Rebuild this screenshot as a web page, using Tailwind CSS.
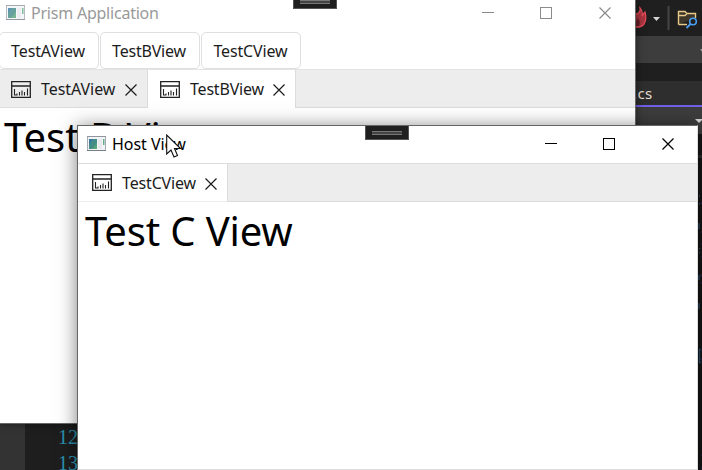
<!DOCTYPE html>
<html lang="en">
<head>
<meta charset="utf-8">
<title>Prism Application</title>
<script src="https://cdn.jsdelivr.net/npm/@tailwindcss/browser@4"></script>
</head>
<body class="relative h-[470px] w-[702px] overflow-hidden bg-[#1f1f1f] font-['Noto_Sans','Open_Sans',sans-serif] text-[16px] text-[#1c1c1c]">
<svg class="hidden">
  <symbol id="app" viewBox="0 0 19 16">
    <rect x=".5" y=".5" width="18" height="14" fill="#f3f4f7" stroke="#a6abb5"/>
    <path d="M0 .5H19" stroke="#8f949d"/>
    <path d="M0 14.500H19" stroke="#777d86"/>
    <rect x="2" y="3" width="8" height="10" fill="#438c88"/>
    <path d="M2 3H6L2 9Z" fill="#397aa0"/><path d="M10 7V13H5Z" fill="#55a579"/>
    <rect x="11" y="3" width="4" height="10" fill="#e8e9ed"/>
    <rect x="16" y="3" width="1.5" height="6" fill="#67ae86"/>
  </symbol>
  <symbol id="chart" viewBox="0 0 20 17">
    <path d="M.7 .7H19.300V16.300H.7ZM.7 5H19.300" fill="none" stroke="#222" stroke-width="1.3"/>
    <path d="M3.500 8V14.500M6 12.500V14.500M8.500 11V14.500M11 9.500V14.500M13.500 11V14.500M16.500 7.500V14.500M3 14H6" fill="none" stroke="#222" stroke-width="1.1"/>
  </symbol>
  <symbol id="cross" viewBox="0 0 12 12"><path d="M.5 .5L11.5 11.5M11.5 .5L.5 11.5" fill="none" stroke="currentColor" stroke-width="1.2"/></symbol>
</svg>

<!-- code editor behind the windows -->
<div class="absolute inset-y-0 right-0 flex w-[67px] flex-col bg-[#141414]">
  <div class="flex h-9 items-center bg-[#1f1f1f]">
    <svg class="h-9 w-[67px]" viewBox="0 0 67 36">
      <path d="M0 14Q6 12 5 8Q8 11 7 16L10 12Q12 20 9 24Q6 28 0 27Z" fill="#a9343f"/>
      <path d="M0 26Q1 20 3 18Q6 22 4 26" fill="#642027"/>
      <path d="M0 15Q6 13 5 8Q8 11 7 16L10 12Q12 20 9 24Q6 28 0 27" fill="none" stroke="#e04a56" stroke-width="1.3"/>
      <path d="M18 17H25L21.500 21Z" fill="#d6d6d6"/>
      <path d="M33.500 6V30" stroke="#454545" stroke-width="2"/>
      <path d="M43.500 24.500V11.500H50L52 13.500H60.500V18M43.500 15.500H50L52 13.500M43.500 24.500H52" fill="#3e372a" stroke="#e8c98a" stroke-width="1.4"/>
      <circle cx="58" cy="21.500" r="3.300" fill="#1f1f1f" stroke="#4aa0f0" stroke-width="1.6"/><path d="M55.500 24L51.500 28" stroke="#4aa0f0" stroke-width="1.8"/>
    </svg>
  </div>
  <div class="flex h-[27px] items-center justify-end bg-[#3d3d3d]"><svg class="h-1 w-[2px]" viewBox="0 0 2 4"><path d="M0 1H2V4Z" fill="#999"/></svg></div>
  <div class="h-[18px] bg-[#1f1f1f]"></div>
  <div class="flex h-6 items-center bg-[#2e2e2e] text-[15px] text-[#e8dfd2]"><span class="-ml-[2px] tracking-[0.4px]">.cs</span></div>
  <div class="h-[2px] bg-[#7160e8]"></div>
  <div class="flex h-[27px] items-center justify-end bg-[#3d3d3d]"><svg class="h-1 w-[7px]" viewBox="0 0 7 4"><path d="M0 0H8L4 4Z" fill="#d6d6d6"/></svg></div>
  <div class="h-[21px] bg-[#171717]"></div>
  <div class="h-[3px] bg-[#2c2c2c]"></div>
  <svg class="h-[312px] w-[67px]" viewBox="0 158 67 312"><path d="M64 196H65M64 204H65M64 223V229M64 248.500H65M64 252.500H65M64 275V280M64 303V309M64 349.500H66M64.500 350V362M64 362.500H66" fill="none" stroke="#284d6b" stroke-width="1.3"/><path d="M66 202V204M66 232H67M66 244H67M66 257H67M66 274V277M66 283H67M66 358V360M66 455H67M66 468H67" stroke="#29275f" stroke-width="1"/></svg>
</div>
<div class="absolute bottom-0 left-0 flex h-[47px] w-[80px] bg-[#1e1e1e]">
  <div class="w-[25px] bg-[#333]"></div>
  <div class="flex flex-1 flex-col items-end pt-[1px] pr-[2px] font-['Liberation_Serif',serif] text-[20px] leading-[26px] text-[#2b91af]">
    <span>12</span><span>13</span>
  </div>
</div>

<!-- main window -->
<main class="absolute left-0 top-0 flex h-[424px] w-[636px] flex-col border-r border-b border-[#666] bg-white shadow-[0_0_8px_rgba(0,0,0,0.5)]">
  <header class="flex h-8 items-start text-[#999]">
    <svg class="mt-[5px] ml-[6px] h-4 w-[19px] opacity-80"><use href="#app"/></svg>
    <span class="mt-[1px] ml-[6px] h-6 w-[262px] text-[16px] leading-6 tracking-[-0.22px]">Prism Application</span>
    <div class="flex h-[9px] w-[44px] justify-center border border-t-0 border-[#555] bg-[#1f1f1f]"><div class="h-1 w-[30px] border-y border-[#777] bg-[#444]"></div></div>
    <div class="mt-[12px] ml-[145px] h-px w-3 bg-[#8b8b8b]"></div>
    <div class="mt-[7px] ml-[46px] h-3 w-3 border border-[#8b8b8b]"></div>
    <svg class="mt-[7px] ml-[47px] h-3 w-3 text-[#8b8b8b]"><use href="#cross"/></svg>
  </header>
  <nav class="-ml-px flex h-[37px] gap-px">
    <button class="w-[100px] rounded-[5px] border border-[#dfdfdf] pr-[2px] tracking-[-0.1px]">TestAView</button>
    <button class="w-[100px] rounded-[5px] border border-[#dfdfdf] pr-[2px] tracking-[-0.2px]">TestBView</button>
    <button class="w-[100px] rounded-[5px] border border-[#dfdfdf] pr-[1px] tracking-[-0.15px]">TestCView</button>
  </nav>
  <div class="flex h-[39px] border-t border-[#e3e3e3] bg-[#ededed]">
    <div class="flex w-[148px] items-center border-r border-b border-[#dcdcdc] pl-[11px]">
      <svg class="mt-[2px] h-[17px] w-5"><use href="#chart"/></svg><span class="ml-[10px] w-[84px] pt-[1px] tracking-[-0.05px]">TestAView</span><svg class="mt-[2px] h-3 w-3"><use href="#cross"/></svg>
    </div>
    <div class="flex w-[148px] items-center border-r border-[#dcdcdc] bg-white pl-[12px]">
      <svg class="mt-[1px] h-[17px] w-5"><use href="#chart"/></svg><span class="ml-[10px] w-[83px] tracking-[-0.2px]">TestBView</span><svg class="mt-[2px] h-3 w-3"><use href="#cross"/></svg>
    </div>
    <div class="flex-1 border-b border-[#dcdcdc]"></div>
  </div>
  <div class="pl-1 text-[40px] leading-[58px] text-black">Test B View</div>
</main>

<!-- floating host window -->
<section class="absolute left-[77px] top-[125px] flex h-[345px] w-[621px] flex-col border-t border-r border-b border-l border-t-[#666] border-r-[#ddd] border-b-[#ddd] border-l-[#666] bg-white shadow-[0_2px_18px_rgba(0,0,0,0.5)]">
  <header class="flex h-[37px] items-start text-black">
    <svg class="mt-[10px] ml-[9px] h-4 w-[19px]"><use href="#app"/></svg>
    <span class="mt-[6px] ml-[6px] h-6 w-[253px] leading-6 tracking-[-0.05px]">Host View</span>
    <div class="flex h-[14px] w-[44px] items-center justify-center border border-t-0 border-[#555] bg-[#1f1f1f]"><div class="h-1 w-[30px] border-y border-[#777] bg-[#444]"></div></div>
    <div class="mt-[17px] ml-[136px] h-px w-3 bg-black"></div>
    <div class="mt-[12px] ml-[46px] h-3 w-3 border border-black"></div>
    <svg class="mt-[12px] ml-[47px] h-3 w-3"><use href="#cross"/></svg>
  </header>
  <div class="flex h-[39px] border-t border-[#dcdcdc] bg-[#ededed]">
    <div class="flex w-[150px] items-center border-r border-b border-r-[#dcdcdc] border-b-[#eee] bg-white pl-[14px]">
      <svg class="h-[17px] w-5"><use href="#chart"/></svg><span class="ml-[10px] w-[83px] pt-[1px] tracking-[-0.15px]">TestCView</span><svg class="mt-[2px] h-3 w-3"><use href="#cross"/></svg>
    </div>
    <div class="flex-1 border-b border-[#dcdcdc]"></div>
  </div>
  <div class="pl-[7px] text-[40px] leading-[57px] tracking-[-0.15px] text-black">Test C View</div>
</section>
<svg class="absolute left-[166px] top-[134px] h-6 w-4" viewBox="0 0 16 24"><path d="M.7 1V20L5 16L8 23L11.500 21.500L8.500 14.500H14.500Z" fill="#fff" stroke="#111" stroke-width="1.1"/></svg>
</body>
</html>
